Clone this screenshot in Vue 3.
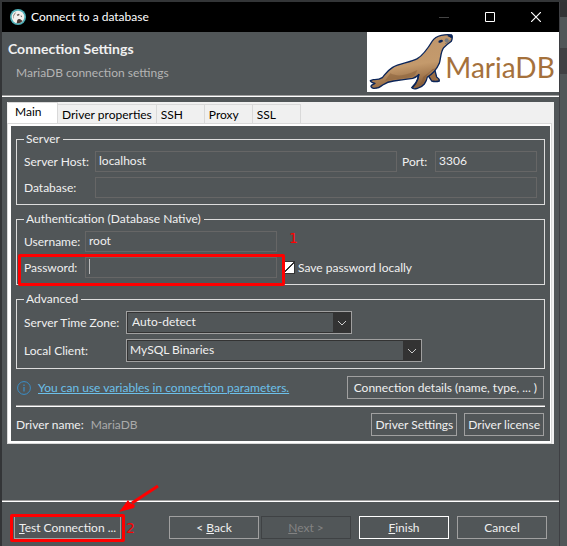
<script setup>
import { ref } from 'vue'

const tabs = ['Main', 'Driver properties', 'SSH', 'Proxy', 'SSL']
const activeTab = ref('Main')
const host = ref('localhost')
const port = ref('3306')
const database = ref('')
const username = ref('root')
const password = ref('')
const savePassword = ref(true)
const timeZone = ref('Auto-detect')
const client = ref('MySQL Binaries')
</script>

<template>
  <div class="desktop">
    <main class="dialog">
      <header class="titlebar">
        <svg class="app-icon" viewBox="0 0 48 48" aria-hidden="true">
          <circle cx="24" cy="24" r="24" fill="#4fb0b8" />
          <circle cx="24" cy="24" r="19" fill="#f4f1ee" />
          <path d="M20 43 L22 33 Q26 28 31 31 L38 36 Q32 43 24 43Z" fill="#4a3a35" />
          <path d="M9 20 Q13 11 19 9 L15 16 L11 22 L11 30 Q8 26 9 20Z" fill="#8d827c" />
          <path d="M20 17 L27 14 L29 18 L23 21Z M31 20 L36 20 L35 25Z" fill="#5d504b" />
        </svg>
        <span class="title">Connect to a database</span>
        <div class="window-buttons">
          <button type="button" aria-label="Minimize" disabled>
            <svg viewBox="0 0 10 10"><path d="M0 5.5H10" stroke="#444" /></svg>
          </button>
          <button type="button" aria-label="Maximize">
            <svg viewBox="0 0 10 10"><path d="M.5 .5H9.5V9.5H.5Z" stroke="#fff" fill="none" /></svg>
          </button>
          <button type="button" aria-label="Close">
            <svg viewBox="0 0 10 10"><path d="M0 0L10 10M10 0L0 10" stroke="#fff" stroke-width="1.2" /></svg>
          </button>
        </div>
      </header>

      <section class="heading">
        <div class="heading-text">
          <h1>Connection Settings</h1>
          <p>MariaDB connection settings</p>
        </div>
        <svg class="banner" viewBox="240 96 576 180" role="img" aria-label="MariaDB">
          <defs>
            <linearGradient id="fur" x1="0" y1="0" x2="0.25" y2="1">
              <stop offset="0" stop-color="#bd946b" />
              <stop offset="0.65" stop-color="#c49a6c" />
              <stop offset="1" stop-color="#8e633c" />
            </linearGradient>
          </defs>
          <rect x="240" y="96" width="576" height="180" fill="#fff" />
          <g stroke="#0b2559" stroke-width="4" stroke-linejoin="round" stroke-linecap="round">
            <path d="M420 222 Q430 236 434 243 Q446 246 457 243 Q457 236 449 231 L444 212Z" fill="#9a6d43" />
            <path d="M494 105 Q481 102 463 106 Q444 110 436 123 C424 143 412 163 391 176 C369 188 337 190 317 202 C300 212 294 224 286 233 Q276 240 259 239 L250 242 Q252 247 264 250 L253 256 Q249 261 259 265 Q275 266 287 255 Q302 245 320 243 Q351 239 377 235 Q387 232 395 224 Q393 238 386 249 L374 263 Q379 269 391 265 Q404 262 412 252 Q419 242 421 231 C436 223 449 208 457 190 C462 174 460 157 470 143 Q482 132 493 124 Q498 111 494 105Z" fill="url(#fur)" />
          </g>
          <path d="M310 220 C340 235 370 219 391 210 Q386 228 370 232 Q332 237 294 242Z" fill="#8b623c" opacity=".55" />
          <path d="M452 204 C443 208 424 216 416 233 L409 248 Q402 256 390 262 Q405 250 408 231 Q424 221 437 207Z" fill="#865a35" opacity=".6" />
          <path d="M396 222 L392 239 Q386 253 377 263" fill="none" stroke="#0b2559" stroke-width="4" />
          <path d="M482 105 L496 106 Q498 113 493 115 Q487 110 482 109Z" fill="#0b2559" />
          <ellipse cx="461" cy="124" rx="7" ry="4" fill="#0b2559" transform="rotate(-15 461 124)" />
          <circle cx="479" cy="121" r="6" fill="#777b80" />
          <path d="M474 131 Q486 128 492 118" fill="none" stroke="#5c6470" stroke-width="2" />
          <text x="475" y="233">MariaDB</text>
        </svg>
      </section>
      <hr class="rule" />

      <section class="tab-folder">
        <div class="tabs" role="tablist">
          <button
            v-for="tab in tabs"
            :key="tab"
            type="button"
            role="tab"
            :aria-selected="tab === activeTab"
            :class="{ active: tab === activeTab }"
            @click="activeTab = tab"
          >{{ tab }}</button>
        </div>

        <div class="panel">
          <fieldset>
            <legend>Server</legend>
            <div class="server-grid">
              <label for="host">Server Host:</label>
              <input id="host" v-model="host" type="text" />
              <label for="port">Port:</label>
              <input id="port" v-model="port" type="text" />
              <label for="database">Database:</label>
              <input id="database" v-model="database" class="wide" type="text" />
            </div>
          </fieldset>

          <fieldset>
            <legend>Authentication (Database Native)</legend>
            <div class="auth-row">
              <div class="credential">
                <label for="username">Username:</label>
                <input id="username" v-model="username" type="text" />
                <span class="step step-one">1</span>
              </div>
            </div>
            <div class="auth-row">
              <div class="credential">
                <label for="password">Password:</label>
                <input id="password" v-model="password" type="password" />
                <span class="caret"></span>
                <span class="highlight password-highlight"></span>
              </div>
              <label class="save">
                <input v-model="savePassword" type="checkbox" />
                <span>Save password locally</span>
              </label>
            </div>
          </fieldset>

          <fieldset>
            <legend>Advanced</legend>
            <div class="advanced-grid">
              <label for="zone">Server Time Zone:</label>
              <div class="combo zone">
                <select id="zone" v-model="timeZone"><option>Auto-detect</option></select>
                <svg viewBox="0 0 10 6"><path d="M1 1L5 5L9 1" /></svg>
              </div>
              <label for="client">Local Client:</label>
              <div class="combo client">
                <select id="client" v-model="client"><option>MySQL Binaries</option></select>
                <svg viewBox="0 0 10 6"><path d="M1 1L5 5L9 1" /></svg>
              </div>
            </div>
          </fieldset>

          <div class="info-row">
            <svg class="info" viewBox="0 0 14 14" aria-hidden="true">
              <circle cx="7" cy="7" r="6.4" fill="none" stroke="#3a8fc8" />
              <path d="M7 6V10.500M7 3.500V5" stroke="#3a8fc8" stroke-width="1.200" />
            </svg>
            <a href="#">You can use variables in connection parameters.</a>
            <button type="button" class="btn push details">Connection details (name, type, ... )</button>
          </div>
          <hr class="rule" />
          <div class="driver-row">
            <span>Driver name:</span>
            <span class="muted">MariaDB</span>
            <button type="button" class="btn push">Driver Settings</button>
            <button type="button" class="btn">Driver license</button>
          </div>
        </div>
      </section>

      <hr class="rule footer-rule" />
      <footer>
        <div class="test">
          <button type="button" class="btn"><u>T</u>est Connection ...</button>
          <span class="highlight test-highlight"></span>
          <span class="step step-two">2</span>
          <svg class="arrow" viewBox="0 0 42 30" aria-hidden="true">
            <path d="M40 3L14 20" stroke="#f00" stroke-width="3" />
            <path d="M1 29L10 17L12 20L17 22L16 25Z" fill="#f00" />
          </svg>
        </div>
        <button type="button" class="btn nav">&lt; <u>B</u>ack</button>
        <button type="button" class="btn nav" disabled><u>N</u>ext &gt;</button>
        <button type="button" class="btn nav primary"><u>F</u>inish</button>
        <button type="button" class="btn nav">Cancel</button>
      </footer>
    </main>
    <aside class="backdrop"></aside>
  </div>
</template>

<style>
body {
  background: #515658;
}
</style>

<style scoped>
* {
  box-sizing: border-box;
}
.desktop {
  display: flex;
  min-height: 100vh;
  padding: 2px 0 0 2px;
  background: #333537;
  color: #f0f0f0;
  font: 12px/16px "Segoe UI", Lato, sans-serif;
}
.dialog {
  flex: 1;
  min-width: 0;
  display: flex;
  flex-direction: column;
  background: #515658;
}
.backdrop {
  width: 8px;
  border-left: 1px solid #3e3f43;
  background: linear-gradient(#323335 15px, #515658 15px 46px, #404043 46px 72px, #515658 72px);
}
button,
input,
select {
  margin: 0;
  border-radius: 0;
  color: inherit;
  font: inherit;
}
label {
  white-space: nowrap;
}
.titlebar {
  display: flex;
  align-items: center;
  height: 30px;
  padding-left: 8px;
  background: #000;
  color: #fff;
}
.app-icon {
  width: 16px;
  height: 16px;
  margin-right: 5px;
}
.window-buttons {
  display: flex;
  margin-left: auto;
}
.window-buttons button {
  display: grid;
  place-items: center;
  width: 46px;
  height: 28px;
  padding: 0;
  border: 0;
  background: none;
}
.window-buttons svg {
  width: 10px;
  height: 10px;
}
.heading {
  display: flex;
  justify-content: space-between;
  height: 63px;
}
.heading-text {
  padding: 9px 0 0 6px;
}
h1 {
  margin: 0;
  font-size: 14px;
  line-height: 16px;
}
p {
  margin: 8px 0 0 8px;
  color: #b4b4b4;
}
.banner {
  width: 192px;
  height: 60px;
}
.banner text {
  font: 400 84px Lato, sans-serif;
  fill: #a5713c;
}
.rule {
  width: 100%;
  height: 2px;
  margin: 0;
  border: 0;
  border-top: 1px solid #a0a0a0;
  background: #fff;
}
.tab-folder {
  margin: 5px 5px 0;
  padding: 0 3px 1px 1px;
  background: #f0f0f0;
}
.tabs {
  display: flex;
  align-items: flex-end;
  height: 22px;
}
.tabs button {
  height: 20px;
  min-width: 48px;
  padding: 0 4px;
  border: 1px solid #d9d9d9;
  border-width: 1px 1px 0 0;
  background: #f0f0f0;
  color: #000;
  text-align: left;
}
.tabs .active {
  width: 50px;
  height: 22px;
  padding-bottom: 3px;
  padding-left: 7px;
  background: #fff;
}
.panel {
  padding: 5px;
  border: solid #fff;
  border-width: 2px 1px 2px 3px;
  outline: 1px solid #d9d9d9;
  outline-offset: 0;
  background: #515658;
}
fieldset {
  min-width: 0;
  margin: 0 0 6px;
  padding: 4px 7px 6px;
  border: 1px solid #dcdcdc;
}
legend {
  height: 16px;
  padding: 0 3px 0 2px;
}
.server-grid {
  display: grid;
  grid-template-columns: 66px 1fr 28px 102px;
  gap: 5px;
  align-items: center;
}
.wide {
  grid-column: 2 / -1;
}
input {
  width: 100%;
  height: 21px;
  padding: 0 3px 2px;
  border: 1px solid #666;
  outline: 0;
  background: transparent;
}
.auth-row {
  display: flex;
  align-items: center;
}
.auth-row + .auth-row {
  margin-top: 5px;
}
.credential {
  position: relative;
  display: grid;
  grid-template-columns: 61px 192px;
  align-items: center;
}
.caret {
  position: absolute;
  top: 2px;
  left: 65px;
  width: 1px;
  height: 15px;
  background: #bbb;
}
.highlight {
  position: absolute;
  border: 3px solid #f00;
  border-radius: 2px;
  pointer-events: none;
}
.password-highlight {
  inset: -3px -8px -8px -6px;
}
.step {
  position: absolute;
  color: #f00;
  font: 14px/16px "DejaVu Sans", sans-serif;
}
.step-one {
  top: -1px;
  left: 265px;
}
.save {
  display: flex;
  align-items: center;
  gap: 3px;
  margin-left: 6px;
}
.save input {
  appearance: none;
  width: 12px;
  height: 13px;
  padding: 0;
  border-color: #333;
  background: #fff;
}
.save input:checked {
  background: linear-gradient(135deg, #fff 46%, #333 46% 54%, #fff 54%);
}
.advanced-grid {
  display: grid;
  grid-template-columns: 102px 1fr;
  gap: 5px 0;
  align-items: center;
}
.combo {
  display: grid;
  grid-template-columns: 1fr 18px;
  align-items: center;
  height: 23px;
  border: 1px solid #a0a0a0;
  background: #333;
}
.combo.zone {
  width: 226px;
}
.combo.client {
  width: 296px;
}
.combo select {
  appearance: none;
  grid-area: 1 / 1 / 2 / 3;
  width: 100%;
  height: 21px;
  padding: 0 4px 1px;
  border: 1px solid #333;
  border-right-width: 18px;
  outline: 0;
  background: #515658;
}
.combo.client select {
  padding-left: 2px;
}
.combo svg {
  grid-area: 1 / 2;
  width: 10px;
  height: 6px;
  margin-left: 4px;
  fill: none;
  stroke: #ccc;
  pointer-events: none;
}
.info-row,
.driver-row {
  display: flex;
  align-items: center;
  padding-right: 1px;
}
.info-row {
  margin: 7px 0 6px;
}
.info {
  width: 14px;
  height: 14px;
  margin: 0 7px 0 1px;
}
a {
  color: #6cc0ea;
}
.driver-row {
  gap: 7px;
  margin-top: 6px;
}
.muted {
  color: #aaa;
}
.btn {
  height: 23px;
  padding: 0 3px;
  border: 1px solid #a0a0a0;
  background: #515658;
  white-space: nowrap;
}
.btn.details {
  padding: 0 6px;
}
.push {
  margin-left: auto;
}
.footer-rule {
  margin-top: 56px;
}
footer {
  display: flex;
  flex: 1;
  align-items: flex-start;
  padding: 14px 12px 7px;
}
.test {
  position: relative;
  margin-right: auto;
}
.test .btn {
  padding: 0 4px;
}
.test-highlight {
  inset: -2px -4px -3px -4px;
}
.step-two {
  top: 4px;
  left: 112px;
}
.arrow {
  position: absolute;
  top: -33px;
  left: 104px;
  width: 42px;
  height: 30px;
}
.nav {
  width: 90px;
}
.nav + .nav {
  margin-left: 8px;
}
.nav:disabled {
  margin-left: 2px;
  border-color: #3f4244;
  color: #838383;
}
.nav.primary {
  border-color: #fff;
}
</style>
